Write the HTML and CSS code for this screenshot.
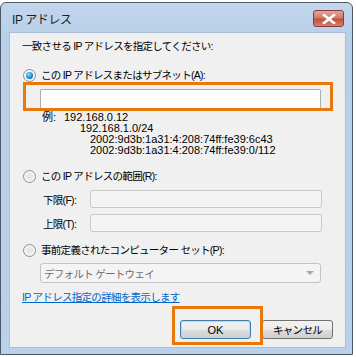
FILE: index.html
```html
<!DOCTYPE html>
<html lang="ja">
<head>
    <meta charset="UTF-8">
    <title>IP アドレス</title>
    <link rel="stylesheet" href="styles.css">
</head>
<body>
    <div class="window">
        <div class="titlebar">
            <span class="title">IP アドレス</span>
            <span class="close">
                <svg width="14" height="10" viewBox="0 0 14 10">
                    <path d="M2 1 L12 9 M12 1 L2 9" stroke="#fff" stroke-width="2.6" stroke-linecap="square"/>
                </svg>
            </span>
        </div>

        <div class="panel">
            <div class="heading">一致させる IP アドレスを指定してください:</div>

            <label class="radio-row r1">
                <span class="radio checked"></span>
                <span>この IP アドレスまたはサブネット(A):</span>
            </label>
            <div class="field main-input"></div>

            <div class="examples">
                <div class="ex-line"><span class="ex-label">例:</span><span>192.168.0.12</span></div>
                <div class="ex-line indent1">192.168.1.0/24</div>
                <div class="ex-line indent2">2002:9d3b:1a31:4:208:74ff:fe39:6c43</div>
                <div class="ex-line indent2">2002:9d3b:1a31:4:208:74ff:fe39:0/112</div>
            </div>

            <label class="radio-row r2">
                <span class="radio"></span>
                <span>この IP アドレスの範囲(R):</span>
            </label>
            <div class="range-row lower">
                <span class="range-label">下限(F):</span>
                <div class="field range-input"></div>
            </div>
            <div class="range-row upper">
                <span class="range-label">上限(T):</span>
                <div class="field range-input"></div>
            </div>

            <label class="radio-row r3">
                <span class="radio"></span>
                <span>事前定義されたコンピューター セット(P):</span>
            </label>
            <div class="select">
                <span>デフォルト ゲートウェイ</span>
                <span class="arrow"></span>
            </div>

            <a class="link" href="#">IP アドレス指定の詳細を表示します</a>

            <div class="buttons">
                <button class="btn default">OK</button>
                <button class="btn">キャンセル</button>
            </div>

            <!-- callouts -->
            <div class="mark mark-input"></div>
            <div class="mark mark-ok"></div>
        </div>
    </div>
</body>
</html>
```

FILE: styles.css
```css
body {
    margin: 0;
    background: #fff;
    font-family: "Liberation Sans", "Noto Sans CJK JP", sans-serif;
    font-size: 10.5px;
    letter-spacing: -0.7px;
    color: #000;
}

.window {
    width: 351px;
    height: 351px;
    margin-top: 2px;
    border: 1px solid #4a5868;
    border-radius: 6px 6px 0 0;
    background: linear-gradient(#c2d6ec, #b7cfe9 40px, #b9d1ea);
    display: flex;
    flex-direction: column;
    box-shadow: 0 1px 0 #2fb7c9;
}

.titlebar {
    height: 29px;
    display: flex;
    align-items: center;
    justify-content: space-between;
    padding: 0 8px 0 11px;
}

.title {
    font-size: 12px;
    letter-spacing: -0.4px;
    color: #1e1e1e;
    margin-top: 2px;
}

.close {
    width: 29px;
    height: 15px;
    border: 1px solid #8a3a3a;
    border-radius: 3px;
    background: linear-gradient(#e2a69a, #d27a6b 45%, #c0503d 55%, #d5826e);
    display: flex;
    align-items: center;
    justify-content: center;
    margin-top: 2px;
}

.panel {
    position: relative;
    flex: 1;
    margin: 0 6px 6px 8px;
    background: #f0f0f0;
    border: 1px solid #a9bed6;
    padding: 6px 12px 0 12px;
    display: flex;
    flex-direction: column;
}

.heading {
    line-height: 14px;
}

.radio-row {
    display: flex;
    align-items: center;
    gap: 5px;
    line-height: 14px;
    margin-left: 1px;
}

.r1 { margin-top: 15px; }
.r2 { margin-top: 13px; }
.r3 { margin-top: 11px; }

.radio {
    width: 11px;
    height: 11px;
    border: 1px solid #8e8f8f;
    border-radius: 50%;
    background: radial-gradient(circle, #e6e6e6 30%, #f8f8f8 70%);
    flex: none;
    position: relative;
}

.radio.checked::after {
    content: "";
    position: absolute;
    left: 2px;
    top: 2px;
    width: 7px;
    height: 7px;
    border-radius: 50%;
    background: radial-gradient(circle at 40% 35%, #8ee0ff, #1f8ad8 55%, #0c4f9a);
}

.field {
    background: #fff;
    border: 1px solid #abadb3;
    border-top-color: #a6a8ad;
    border-radius: 2px;
    box-sizing: border-box;
}

.main-input {
    margin: 7px 0 0 18px;
    width: 281px;
    height: 20px;
}

.examples {
    margin-top: 3px;
    margin-left: 20px;
    line-height: 11px;
    font-size: 11px;
    letter-spacing: 0;
}

.ex-label {
    display: inline-block;
    width: 22px;
}

.indent1 { padding-left: 38px; }
.indent2 { padding-left: 48px; }

.range-row {
    display: flex;
    align-items: center;
    margin-left: 21px;
}

.lower { margin-top: 7px; }
.upper { margin-top: 6px; }

.range-label {
    width: 47px;
}

.range-input {
    width: 232px;
    height: 18px;
    background: #f4f4f4;
    border-color: #c9c9c9;
}

.select {
    margin: 6px 0 0 18px;
    width: 281px;
    height: 20px;
    box-sizing: border-box;
    border: 1px solid #c4c4c4;
    border-radius: 3px;
    background: #f4f4f4;
    color: #6d6d6d;
    display: flex;
    align-items: center;
    justify-content: space-between;
    padding: 0 6px 0 3px;
}

.arrow {
    width: 0;
    height: 0;
    border-left: 4px solid transparent;
    border-right: 4px solid transparent;
    border-top: 4px solid #a8a8a8;
}

.link {
    margin-top: 7px;
    color: #0066cc;
    line-height: 14px;
    align-self: flex-start;
}

.buttons {
    display: flex;
    justify-content: flex-end;
    gap: 11px;
    margin-top: 16px;
}

.btn {
    font: inherit;
    letter-spacing: -0.7px;
    height: 19px;
    width: 71px;
    padding: 0;
    border: 1px solid #707070;
    border-radius: 3px;
    background: linear-gradient(#f2f2f2, #ebebeb 50%, #dddddd 51%, #cfcfcf);
    color: #000;
}

.btn.default {
    font-size: 11px;
    letter-spacing: 0;
    border-color: #3c7fb1;
    box-shadow: inset 0 0 0 1px #a6e0f7;
}

.mark {
    position: absolute;
    border: 3px solid #e8780c;
}

.mark-input {
    left: 13px;
    top: 49px;
    width: 304px;
    height: 23px;
}

.mark-ok {
    left: 162px;
    top: 273px;
    width: 85px;
    height: 33px;
}
```
